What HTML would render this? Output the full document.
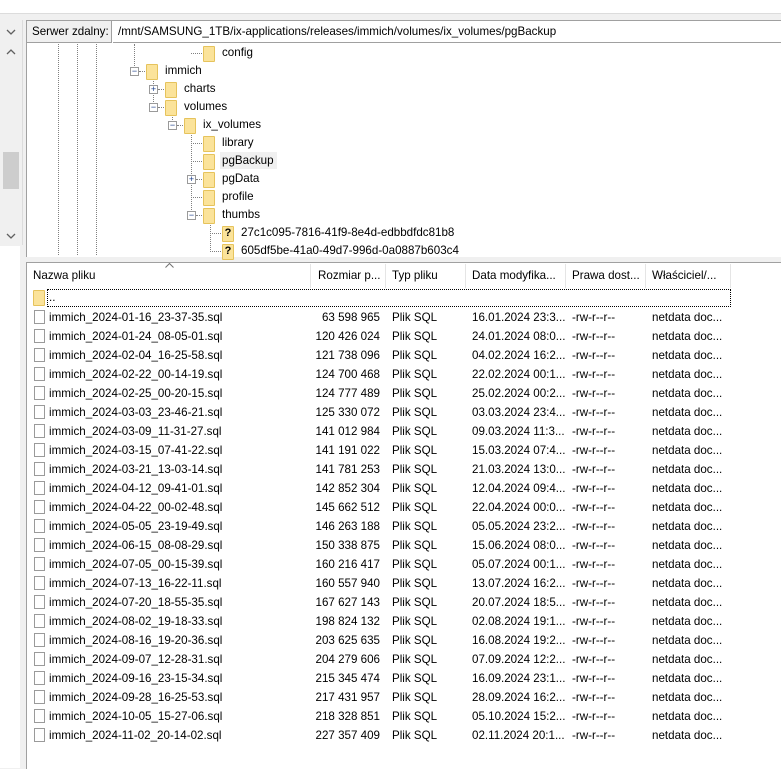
<!DOCTYPE html><html><head><style>
body{margin:0;width:781px;height:768px;background:#f0f0f0;font-family:"Liberation Sans",sans-serif;font-size:11.6px;color:#000;position:relative;overflow:hidden}
.a{position:absolute;white-space:nowrap}
.f{position:absolute;width:12px;height:16px;background:#fbe39a;border:1px solid #e6c35c;box-sizing:border-box;border-radius:1px}
.ex{position:absolute;width:9px;height:9px;border:1px solid #9a9a9a;background:#fff;box-sizing:border-box;font-size:9px;line-height:7px;text-align:center;color:#1b3e8a}
.vd{position:absolute;width:0;border-left:1px dotted #808080}
.hd{position:absolute;height:0;border-top:1px dotted #808080}
.doc{position:absolute;width:11px;height:14px;border:1px solid #9a9a9a;background:#fff;box-sizing:border-box}
.r{position:absolute;left:0;height:19px;line-height:19px;width:760px}
.r span{position:absolute}
.t{top:1px}
</style></head><body>
<div class="a" style="left:0;top:0;width:781px;height:13px;background:#fff;border-bottom:1px solid #dcdcdc"></div>
<!-- left pane -->
<div class="a" style="left:0;top:20px;width:22px;height:225px;background:#f0f0f0;border-right:1px solid #dcdcdc"></div>
<svg class="a" style="left:6px;top:29px" width="10" height="6"><path d="M1 1L5 5L9 1" fill="none" stroke="#606060" stroke-width="1.3"/></svg>
<svg class="a" style="left:6px;top:49px" width="10" height="6"><path d="M1 5L5 1L9 5" fill="none" stroke="#606060" stroke-width="1.3"/></svg>
<div class="a" style="left:3px;top:152px;width:16px;height:37px;background:#cdcdcd"></div>
<svg class="a" style="left:6px;top:233px" width="10" height="6"><path d="M1 1L5 5L9 1" fill="none" stroke="#606060" stroke-width="1.3"/></svg>
<div class="a" style="left:0;top:246px;width:20px;height:522px;background:#fff"></div>
<!-- tree pane -->
<div class="a" style="left:26px;top:20px;width:755px;height:236px;background:#fff;border-left:1px solid #a0a0a0;border-top:1px solid #a0a0a0"></div>
<div class="a" style="left:27px;top:21px;width:85px;height:22px;background:#f0f0f0;border-right:1px solid #a0a0a0;border-bottom:1px solid #a0a0a0;line-height:22px;padding-left:5px;box-sizing:border-box">Serwer zdalny:</div>
<div class="a" style="left:113px;top:21px;width:668px;height:22px;line-height:22px;padding-left:5px;border-bottom:1px solid #a0a0a0;box-sizing:border-box">/mnt/SAMSUNG_1TB/ix-applications/releases/immich/volumes/ix_volumes/pgBackup</div>
<div class="vd" style="left:58px;top:44px;height:211px"></div>
<div class="vd" style="left:77px;top:44px;height:211px"></div>
<div class="vd" style="left:96px;top:44px;height:211px"></div>
<div class="vd" style="left:134px;top:44px;height:26px"></div>
<div class="vd" style="left:153px;top:78px;height:28px"></div>
<div class="vd" style="left:172px;top:114px;height:10px"></div>
<div class="vd" style="left:191px;top:130px;height:84px"></div>
<div class="vd" style="left:210px;top:222px;height:28px"></div>
<div class="hd" style="left:191px;top:53px;width:11px"></div>
<div class="hd" style="left:139px;top:71px;width:6px"></div>
<div class="hd" style="left:158px;top:89px;width:6px"></div>
<div class="hd" style="left:158px;top:107px;width:6px"></div>
<div class="hd" style="left:177px;top:125px;width:6px"></div>
<div class="hd" style="left:191px;top:143px;width:11px"></div>
<div class="hd" style="left:191px;top:161px;width:11px"></div>
<div class="hd" style="left:196px;top:179px;width:6px"></div>
<div class="hd" style="left:191px;top:197px;width:11px"></div>
<div class="hd" style="left:196px;top:215px;width:6px"></div>
<div class="hd" style="left:210px;top:233px;width:11px"></div>
<div class="hd" style="left:210px;top:251px;width:11px"></div>
<div class="ex" style="left:130px;top:67px">&#8722;</div>
<div class="ex" style="left:149px;top:85px">+</div>
<div class="ex" style="left:149px;top:103px">&#8722;</div>
<div class="ex" style="left:168px;top:121px">&#8722;</div>
<div class="ex" style="left:187px;top:175px">+</div>
<div class="ex" style="left:187px;top:211px">&#8722;</div>
<div class="f" style="left:203px;top:46px"></div><div class="a" style="left:222px;top:46px">config</div>
<div class="f" style="left:146px;top:64px"></div><div class="a" style="left:165px;top:64px">immich</div>
<div class="f" style="left:165px;top:82px"></div><div class="a" style="left:184px;top:82px">charts</div>
<div class="f" style="left:165px;top:100px"></div><div class="a" style="left:184px;top:100px">volumes</div>
<div class="f" style="left:184px;top:118px"></div><div class="a" style="left:203px;top:118px">ix_volumes</div>
<div class="f" style="left:203px;top:136px"></div><div class="a" style="left:222px;top:136px">library</div>
<div class="f" style="left:203px;top:154px"></div><div class="a" style="left:220px;top:152px;background:#f0f0f0;padding:2px 3px 2px 2px">pgBackup</div>
<div class="f" style="left:203px;top:172px"></div><div class="a" style="left:222px;top:172px">pgData</div>
<div class="f" style="left:203px;top:190px"></div><div class="a" style="left:222px;top:190px">profile</div>
<div class="f" style="left:203px;top:208px"></div><div class="a" style="left:222px;top:208px">thumbs</div>
<div class="f" style="left:222px;top:226px;font-weight:bold;font-size:11px;line-height:12px;text-align:center">?</div><div class="a" style="left:241px;top:226px">27c1c095-7816-41f9-8e4d-edbbdfdc81b8</div>
<div class="f" style="left:222px;top:244px;font-weight:bold;font-size:11px;line-height:12px;text-align:center">?</div><div class="a" style="left:241px;top:244px">605df5be-41a0-49d7-996d-0a0887b603c4</div>
<!-- list pane -->
<div class="a" style="left:26px;top:262px;width:755px;height:506px;background:#fff;border-left:1px solid #a0a0a0;border-top:1px solid #a0a0a0"></div>
<svg class="a" style="left:165px;top:263px" width="9" height="5"><path d="M0.5 4.5L4.5 0.5L8.5 4.5" fill="none" stroke="#707070"/></svg>
<div class="a" style="left:27px;top:264px;width:754px;height:24px;line-height:24px">
<span class="a" style="left:6px">Nazwa pliku</span>
<span class="a" style="left:283px;top:0;height:24px;border-left:1px solid #e5e5e5;padding-left:7px;width:68px">Rozmiar p...</span>
<span class="a" style="left:358px;top:0;height:24px;border-left:1px solid #e5e5e5;padding-left:6px">Typ pliku</span>
<span class="a" style="left:438px;top:0;height:24px;border-left:1px solid #e5e5e5;padding-left:6px">Data modyfika...</span>
<span class="a" style="left:538px;top:0;height:24px;border-left:1px solid #e5e5e5;padding-left:6px">Prawa dost...</span>
<span class="a" style="left:618px;top:0;height:24px;border-left:1px solid #e5e5e5;border-right:1px solid #e5e5e5;padding-left:6px;width:78px">Właściciel/...</span>
</div>
<div class="f" style="left:33px;top:290px"></div>
<div class="a" style="left:47px;top:289px;width:684px;height:18px;border:1px dotted #000;box-sizing:border-box;line-height:16px;padding-left:1px">..</div>
<div id="L" style="position:absolute;left:0;top:308px">
<div class="r" style="top:0"><i class="doc" style="left:34px;top:2px"></i><span style="left:49px">immich_2024-01-16_23-37-35.sql</span><span style="right:380px">63 598 965</span><span style="left:392px">Plik SQL</span><span style="left:472px">16.01.2024 23:3...</span><span style="left:572px">-rw-r--r--</span><span style="left:652px">netdata doc...</span></div>
<div class="r" style="top:19px"><i class="doc" style="left:34px;top:2px"></i><span style="left:49px">immich_2024-01-24_08-05-01.sql</span><span style="right:380px">120 426 024</span><span style="left:392px">Plik SQL</span><span style="left:472px">24.01.2024 08:0...</span><span style="left:572px">-rw-r--r--</span><span style="left:652px">netdata doc...</span></div>
<div class="r" style="top:38px"><i class="doc" style="left:34px;top:2px"></i><span style="left:49px">immich_2024-02-04_16-25-58.sql</span><span style="right:380px">121 738 096</span><span style="left:392px">Plik SQL</span><span style="left:472px">04.02.2024 16:2...</span><span style="left:572px">-rw-r--r--</span><span style="left:652px">netdata doc...</span></div>
<div class="r" style="top:57px"><i class="doc" style="left:34px;top:2px"></i><span style="left:49px">immich_2024-02-22_00-14-19.sql</span><span style="right:380px">124 700 468</span><span style="left:392px">Plik SQL</span><span style="left:472px">22.02.2024 00:1...</span><span style="left:572px">-rw-r--r--</span><span style="left:652px">netdata doc...</span></div>
<div class="r" style="top:76px"><i class="doc" style="left:34px;top:2px"></i><span style="left:49px">immich_2024-02-25_00-20-15.sql</span><span style="right:380px">124 777 489</span><span style="left:392px">Plik SQL</span><span style="left:472px">25.02.2024 00:2...</span><span style="left:572px">-rw-r--r--</span><span style="left:652px">netdata doc...</span></div>
<div class="r" style="top:95px"><i class="doc" style="left:34px;top:2px"></i><span style="left:49px">immich_2024-03-03_23-46-21.sql</span><span style="right:380px">125 330 072</span><span style="left:392px">Plik SQL</span><span style="left:472px">03.03.2024 23:4...</span><span style="left:572px">-rw-r--r--</span><span style="left:652px">netdata doc...</span></div>
<div class="r" style="top:114px"><i class="doc" style="left:34px;top:2px"></i><span style="left:49px">immich_2024-03-09_11-31-27.sql</span><span style="right:380px">141 012 984</span><span style="left:392px">Plik SQL</span><span style="left:472px">09.03.2024 11:3...</span><span style="left:572px">-rw-r--r--</span><span style="left:652px">netdata doc...</span></div>
<div class="r" style="top:133px"><i class="doc" style="left:34px;top:2px"></i><span style="left:49px">immich_2024-03-15_07-41-22.sql</span><span style="right:380px">141 191 022</span><span style="left:392px">Plik SQL</span><span style="left:472px">15.03.2024 07:4...</span><span style="left:572px">-rw-r--r--</span><span style="left:652px">netdata doc...</span></div>
<div class="r" style="top:152px"><i class="doc" style="left:34px;top:2px"></i><span style="left:49px">immich_2024-03-21_13-03-14.sql</span><span style="right:380px">141 781 253</span><span style="left:392px">Plik SQL</span><span style="left:472px">21.03.2024 13:0...</span><span style="left:572px">-rw-r--r--</span><span style="left:652px">netdata doc...</span></div>
<div class="r" style="top:171px"><i class="doc" style="left:34px;top:2px"></i><span style="left:49px">immich_2024-04-12_09-41-01.sql</span><span style="right:380px">142 852 304</span><span style="left:392px">Plik SQL</span><span style="left:472px">12.04.2024 09:4...</span><span style="left:572px">-rw-r--r--</span><span style="left:652px">netdata doc...</span></div>
<div class="r" style="top:190px"><i class="doc" style="left:34px;top:2px"></i><span style="left:49px">immich_2024-04-22_00-02-48.sql</span><span style="right:380px">145 662 512</span><span style="left:392px">Plik SQL</span><span style="left:472px">22.04.2024 00:0...</span><span style="left:572px">-rw-r--r--</span><span style="left:652px">netdata doc...</span></div>
<div class="r" style="top:209px"><i class="doc" style="left:34px;top:2px"></i><span style="left:49px">immich_2024-05-05_23-19-49.sql</span><span style="right:380px">146 263 188</span><span style="left:392px">Plik SQL</span><span style="left:472px">05.05.2024 23:2...</span><span style="left:572px">-rw-r--r--</span><span style="left:652px">netdata doc...</span></div>
<div class="r" style="top:228px"><i class="doc" style="left:34px;top:2px"></i><span style="left:49px">immich_2024-06-15_08-08-29.sql</span><span style="right:380px">150 338 875</span><span style="left:392px">Plik SQL</span><span style="left:472px">15.06.2024 08:0...</span><span style="left:572px">-rw-r--r--</span><span style="left:652px">netdata doc...</span></div>
<div class="r" style="top:247px"><i class="doc" style="left:34px;top:2px"></i><span style="left:49px">immich_2024-07-05_00-15-39.sql</span><span style="right:380px">160 216 417</span><span style="left:392px">Plik SQL</span><span style="left:472px">05.07.2024 00:1...</span><span style="left:572px">-rw-r--r--</span><span style="left:652px">netdata doc...</span></div>
<div class="r" style="top:266px"><i class="doc" style="left:34px;top:2px"></i><span style="left:49px">immich_2024-07-13_16-22-11.sql</span><span style="right:380px">160 557 940</span><span style="left:392px">Plik SQL</span><span style="left:472px">13.07.2024 16:2...</span><span style="left:572px">-rw-r--r--</span><span style="left:652px">netdata doc...</span></div>
<div class="r" style="top:285px"><i class="doc" style="left:34px;top:2px"></i><span style="left:49px">immich_2024-07-20_18-55-35.sql</span><span style="right:380px">167 627 143</span><span style="left:392px">Plik SQL</span><span style="left:472px">20.07.2024 18:5...</span><span style="left:572px">-rw-r--r--</span><span style="left:652px">netdata doc...</span></div>
<div class="r" style="top:304px"><i class="doc" style="left:34px;top:2px"></i><span style="left:49px">immich_2024-08-02_19-18-33.sql</span><span style="right:380px">198 824 132</span><span style="left:392px">Plik SQL</span><span style="left:472px">02.08.2024 19:1...</span><span style="left:572px">-rw-r--r--</span><span style="left:652px">netdata doc...</span></div>
<div class="r" style="top:323px"><i class="doc" style="left:34px;top:2px"></i><span style="left:49px">immich_2024-08-16_19-20-36.sql</span><span style="right:380px">203 625 635</span><span style="left:392px">Plik SQL</span><span style="left:472px">16.08.2024 19:2...</span><span style="left:572px">-rw-r--r--</span><span style="left:652px">netdata doc...</span></div>
<div class="r" style="top:342px"><i class="doc" style="left:34px;top:2px"></i><span style="left:49px">immich_2024-09-07_12-28-31.sql</span><span style="right:380px">204 279 606</span><span style="left:392px">Plik SQL</span><span style="left:472px">07.09.2024 12:2...</span><span style="left:572px">-rw-r--r--</span><span style="left:652px">netdata doc...</span></div>
<div class="r" style="top:361px"><i class="doc" style="left:34px;top:2px"></i><span style="left:49px">immich_2024-09-16_23-15-34.sql</span><span style="right:380px">215 345 474</span><span style="left:392px">Plik SQL</span><span style="left:472px">16.09.2024 23:1...</span><span style="left:572px">-rw-r--r--</span><span style="left:652px">netdata doc...</span></div>
<div class="r" style="top:380px"><i class="doc" style="left:34px;top:2px"></i><span style="left:49px">immich_2024-09-28_16-25-53.sql</span><span style="right:380px">217 431 957</span><span style="left:392px">Plik SQL</span><span style="left:472px">28.09.2024 16:2...</span><span style="left:572px">-rw-r--r--</span><span style="left:652px">netdata doc...</span></div>
<div class="r" style="top:399px"><i class="doc" style="left:34px;top:2px"></i><span style="left:49px">immich_2024-10-05_15-27-06.sql</span><span style="right:380px">218 328 851</span><span style="left:392px">Plik SQL</span><span style="left:472px">05.10.2024 15:2...</span><span style="left:572px">-rw-r--r--</span><span style="left:652px">netdata doc...</span></div>
<div class="r" style="top:418px"><i class="doc" style="left:34px;top:2px"></i><span style="left:49px">immich_2024-11-02_20-14-02.sql</span><span style="right:380px">227 357 409</span><span style="left:392px">Plik SQL</span><span style="left:472px">02.11.2024 20:1...</span><span style="left:572px">-rw-r--r--</span><span style="left:652px">netdata doc...</span></div>
</div>
</body></html>
